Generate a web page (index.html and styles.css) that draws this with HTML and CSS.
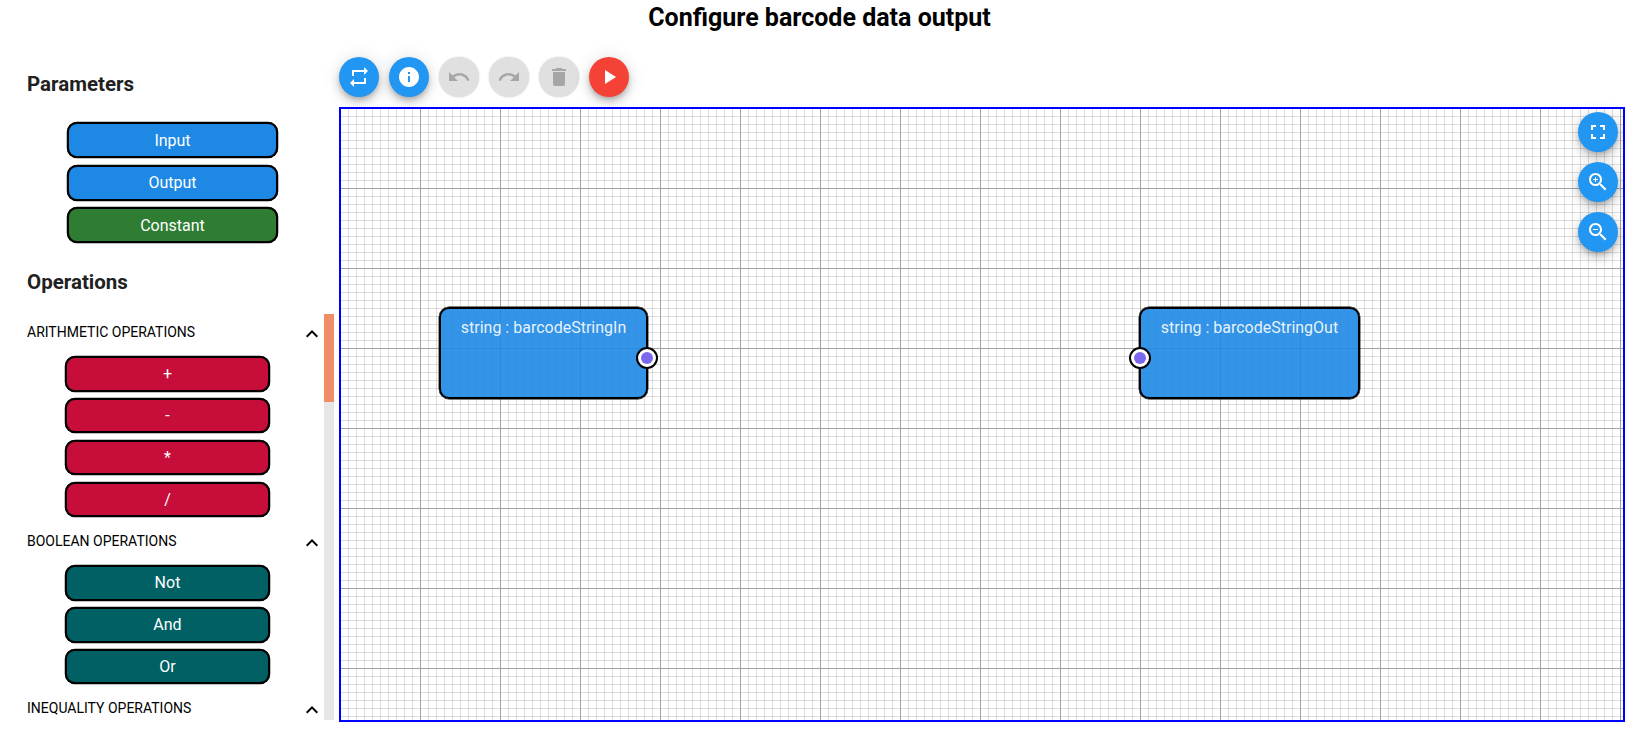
FILE: index.html
```html
<!DOCTYPE html>
<html lang="en">
<head>
  <meta charset="UTF-8">
  <meta name="viewport" content="width=device-width, initial-scale=1.0">
  <title>Configure barcode data output</title>
  <link rel="stylesheet" href="styles.css">
</head>
<body>

  <!-- Header -->
  <h1 class="page-title">Configure barcode data output</h1>

  <div class="editor">

    <!-- Palette -->
    <aside class="sidebar">
      <h2 class="sidebar-title params-title">Parameters</h2>
      <div class="param-list">
        <button class="block blue">Input</button>
        <button class="block blue">Output</button>
        <button class="block green">Constant</button>
      </div>

      <h2 class="sidebar-title ops-title">Operations</h2>
      <div class="ops-scroll">
        <div class="ops-list">
          <div class="group-head">
            <span>Arithmetic operations</span>
            <svg class="chevron" viewBox="0 0 24 24"><path d="M12 8l-6 6 1.41 1.41L12 10.83l4.59 4.58L18 14z"/></svg>
          </div>
          <div class="group-items">
            <button class="block red">+</button>
            <button class="block red">-</button>
            <button class="block red">*</button>
            <button class="block red">/</button>
          </div>

          <div class="group-head">
            <span>Boolean operations</span>
            <svg class="chevron" viewBox="0 0 24 24"><path d="M12 8l-6 6 1.41 1.41L12 10.83l4.59 4.58L18 14z"/></svg>
          </div>
          <div class="group-items">
            <button class="block teal">Not</button>
            <button class="block teal">And</button>
            <button class="block teal">Or</button>
          </div>

          <div class="group-head">
            <span>Inequality operations</span>
            <svg class="chevron" viewBox="0 0 24 24"><path d="M12 8l-6 6 1.41 1.41L12 10.83l4.59 4.58L18 14z"/></svg>
          </div>
        </div>
        <div class="scrollbar"><div class="scrollbar-thumb"></div></div>
      </div>
    </aside>

    <!-- Toolbar and canvas -->
    <main class="workspace">
      <div class="toolbar">
        <button class="fab"><svg viewBox="0 0 24 24"><path d="M7 7h10v3l4-4-4-4v3H5v6h2V7zm10 10H7v-3l-4 4 4 4v-3h12v-6h-2v4z"/></svg></button>
        <button class="fab"><svg viewBox="0 0 24 24"><path d="M12 2C6.48 2 2 6.48 2 12s4.48 10 10 10 10-4.48 10-10S17.52 2 12 2zm1 15h-2v-6h2v6zm0-8h-2V7h2v2z"/></svg></button>
        <button class="fab disabled"><svg viewBox="0 0 24 24"><path d="M12.5 8c-2.65 0-5.05.99-6.9 2.6L2 7v9h9l-3.62-3.62c1.39-1.16 3.16-1.88 5.12-1.88 3.54 0 6.55 2.31 7.6 5.5l2.37-.78C21.08 11.03 17.15 8 12.5 8z"/></svg></button>
        <button class="fab disabled"><svg viewBox="0 0 24 24"><path d="M18.4 10.6C16.55 8.99 14.15 8 11.5 8c-4.65 0-8.58 3.03-9.96 7.22L3.9 16c1.05-3.19 4.05-5.5 7.6-5.5 1.95 0 3.73.72 5.12 1.88L13 16h9V7l-3.6 3.6z"/></svg></button>
        <button class="fab disabled"><svg viewBox="0 0 24 24"><path d="M6 19c0 1.1.9 2 2 2h8c1.1 0 2-.9 2-2V7H6v12zM19 4h-3.5l-1-1h-5l-1 1H5v2h14V4z"/></svg></button>
        <button class="fab danger"><svg viewBox="0 0 24 24"><path d="M8 5v14l11-7z"/></svg></button>
      </div>

      <div class="canvas">
        <div class="node node-in">
          string : barcodeStringIn
          <span class="port port-right"></span>
        </div>
        <div class="node node-out">
          string : barcodeStringOut
          <span class="port port-left"></span>
        </div>

        <div class="canvas-controls">
          <button class="fab"><svg viewBox="0 0 24 24"><path d="M7 14H5v5h5v-2H7v-3zm-2-4h2V7h3V5H5v5zm12 7h-3v2h5v-5h-2v3zM14 5v2h3v3h2V5h-5z"/></svg></button>
          <button class="fab"><svg viewBox="0 0 24 24"><path d="M15.5 14h-.79l-.28-.27C15.41 12.59 16 11.11 16 9.5 16 5.91 13.09 3 9.5 3S3 5.91 3 9.5 5.91 16 9.5 16c1.61 0 3.09-.59 4.23-1.57l.27.28v.79l5 4.99L20.49 19l-4.99-5zm-6 0C7.01 14 5 11.99 5 9.5S7.01 5 9.5 5 14 7.01 14 9.5 11.99 14 9.5 14z"/><path d="M12 10h-2v2H9v-2H7V9h2V7h1v2h2v1z"/></svg></button>
          <button class="fab"><svg viewBox="0 0 24 24"><path d="M15.5 14h-.79l-.28-.27C15.41 12.59 16 11.11 16 9.5 16 5.91 13.09 3 9.5 3S3 5.91 3 9.5 5.91 16 9.5 16c1.61 0 3.09-.59 4.23-1.57l.27.28v.79l5 4.99L20.49 19l-4.99-5zm-6 0C7.01 14 5 11.99 5 9.5S7.01 5 9.5 5 14 7.01 14 9.5 11.99 14 9.5 14z"/><path d="M7 9h5v1H7z"/></svg></button>
        </div>
      </div>
    </main>
  </div>

</body>
</html>
```

FILE: styles.css
```css
* {
  box-sizing: border-box;
}

html, body {
  height: 100%;
}

body {
  margin: 0;
  font-family: Roboto, Arial, sans-serif;
  background-color: #fff;
  overflow: hidden;
}

button {
  font-family: inherit;
}

.page-title {
  margin: 0;
  height: 34px;
  padding-right: 4px;
  line-height: 35px;
  font-size: 25px;
  font-weight: 700;
  text-align: center;
  color: #000;
}

.editor {
  display: flex;
}

/* Palette */
.sidebar {
  width: 339px;
  flex: none;
  padding-left: 27px;
}

.sidebar-title {
  margin: 0;
  font-size: 20.5px;
  font-weight: 700;
  line-height: 24px;
  color: #212121;
}

.params-title {
  margin-top: 38px;
}

.ops-title {
  margin-top: 27px;
}

.param-list {
  display: flex;
  flex-direction: column;
  gap: 6.5px;
  width: 211px;
  margin: 26px 0 0 40px;
}

.block {
  display: block;
  width: 100%;
  height: 36px;
  padding: 0;
  border: 2px solid #000;
  border-radius: 10px;
  box-shadow: 0 0 0 0.25px #000;
  color: #fff;
  font-size: 16px;
  cursor: pointer;
}

.block.blue {
  background-color: #1e88e5;
}

.block.green {
  background-color: #2e7d32;
}

.block.red {
  background-color: #c70d3a;
}

.block.teal {
  background-color: #006064;
}

.ops-scroll {
  display: flex;
  margin-top: 14px;
  height: 412px;
}

.ops-list {
  width: 297px;
  overflow: hidden;
}

.group-head {
  display: flex;
  align-items: center;
  justify-content: space-between;
  height: 48px;
  font-size: 14px;
  text-transform: uppercase;
  color: #000;
}

.chevron {
  width: 24px;
  height: 24px;
  margin-top: 4px;
}

.group-items {
  display: flex;
  flex-direction: column;
  gap: 6.4px;
  width: 205px;
  margin-left: 38px;
}

.group-items .block {
  height: 35.5px;
}

.scrollbar {
  width: 10px;
  margin-top: 6px;
  background-color: #e6e6e6;
}

.scrollbar-thumb {
  height: 88px;
  background-color: #ef8d68;
}

/* Toolbar and canvas */
.workspace {
  width: 1286px;
  flex: none;
}

.toolbar {
  display: flex;
  gap: 10px;
  margin-top: 23px;
}

.fab {
  display: flex;
  align-items: center;
  justify-content: center;
  width: 40px;
  height: 40px;
  padding: 0;
  border: none;
  border-radius: 50%;
  background-color: #2196f3;
  fill: #fff;
  cursor: pointer;
  box-shadow: 0 3px 5px -1px rgba(0, 0, 0, 0.2), 0 6px 10px 0 rgba(0, 0, 0, 0.14), 0 1px 18px 0 rgba(0, 0, 0, 0.12);
}

.fab svg {
  width: 24px;
  height: 24px;
}

.fab.disabled {
  background-color: #e0e0e0;
  fill: #a6a6a6;
  box-shadow: 0 0 2px rgba(0, 0, 0, 0.2);
  cursor: default;
}

.fab.danger {
  background-color: #f44336;
}

.canvas {
  position: relative;
  height: 615px;
  margin-top: 10px;
  border: 2px solid #0000ff;
  background-color: #fff;
  background-origin: border-box;
  background-image:
    linear-gradient(to right, #a3a3a3 1px, transparent 1px),
    linear-gradient(to bottom, #a3a3a3 1px, transparent 1px),
    linear-gradient(to right, rgba(0, 0, 0, 0.13) 1px, transparent 1px),
    linear-gradient(to bottom, rgba(0, 0, 0, 0.13) 1px, transparent 1px);
  background-size: 80px 80px, 80px 80px, 8px 8px, 8px 8px;
  background-position: 1px 1px;
}

.node {
  position: absolute;
  top: 198px;
  height: 92px;
  padding-top: 9px;
  border: 2px solid #000;
  border-radius: 10px;
  box-shadow: 0 0 0 0.4px #000;
  background-color: rgba(30, 136, 229, 0.9);
  color: rgba(255, 255, 255, 0.9);
  font-size: 16px;
  line-height: 20px;
  text-align: center;
}

.node-in {
  left: 98px;
  width: 209px;
}

.node-out {
  left: 798px;
  width: 221px;
}

.port {
  position: absolute;
  top: 38px;
  width: 22px;
  height: 22px;
  border: 2.5px solid #000;
  border-radius: 50%;
  background-color: #fff;
}

.port::after {
  content: "";
  position: absolute;
  top: 3px;
  left: 3px;
  width: 12px;
  height: 12px;
  border-radius: 50%;
  background-color: #7b68ee;
}

.port-right {
  right: -12px;
}

.port-left {
  left: -12px;
}

.canvas-controls {
  position: absolute;
  top: 3px;
  right: 5px;
  display: flex;
  flex-direction: column;
  gap: 10px;
}
```
